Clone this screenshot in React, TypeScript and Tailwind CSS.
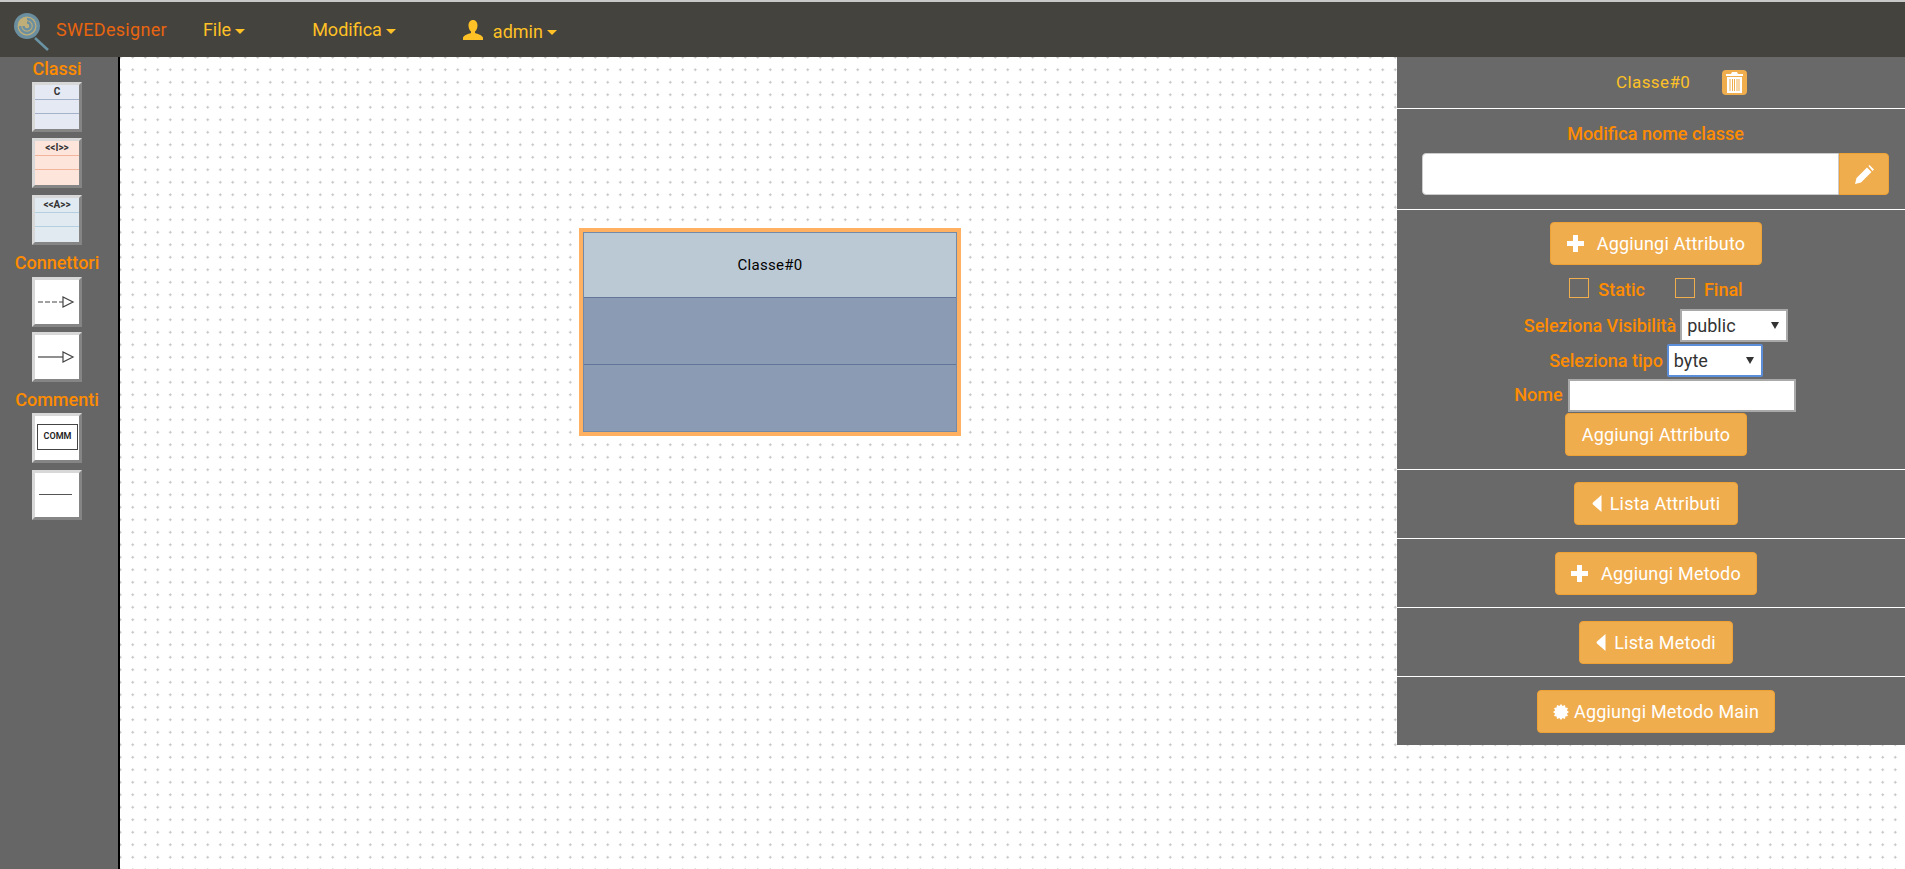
const font = "font-['Roboto',sans-serif]";

// 12-point seal for the "main" button
const certPoints = Array.from({ length: 24 }, (_, i) => {
  const r = i % 2 === 0 ? 8 : 6.2;
  const a = (i * Math.PI) / 12;
  return `${(8 + r * Math.sin(a)).toFixed(2)},${(8 - r * Math.cos(a)).toFixed(2)}`;
}).join(" ");

function Caret() {
  return <span className="inline-block ml-1 w-0 h-0 align-middle border-x-[5px] border-x-transparent border-t-[5px] border-t-current" />;
}

function Logo() {
  return (
    <svg width="36" height="40" viewBox="0 0 36 40" className="shrink-0">
      <line x1="22" y1="27" x2="35" y2="39" stroke="#6a93a3" strokeWidth="2.5" />
      <circle cx="14" cy="15" r="13" fill="#6c8fa0" />
      <circle cx="14" cy="15" r="9.500" fill="#bfae78" />
      <path d="M14 8a7 7 0 1 1-7 7 M14 11.500a3.500 3.500 0 1 1-3.500 3.500" fill="none" stroke="#6c8fa0" strokeWidth="2.500" />
    </svg>
  );
}

function PlusIcon() {
  return (
    <svg width="17" height="17" viewBox="0 0 17 17" fill="#fff" className="shrink-0">
      <path d="M6 0h5v6h6v5h-6v6H6v-6H0V6h6z" />
    </svg>
  );
}

function TriangleIcon() {
  return (
    <svg width="10" height="17" viewBox="0 0 10 17" fill="#fff" className="shrink-0">
      <path d="M9.500 0v17L1 9.500a1.500 1.500 0 0 1 0-2z" />
    </svg>
  );
}

function CertIcon() {
  return (
    <svg width="16" height="16" viewBox="0 0 16 16" fill="#fff" className="shrink-0">
      <polygon points={certPoints} />
    </svg>
  );
}

function TrashIcon() {
  return (
    <svg width="17" height="21" viewBox="0 0 17 21" fill="#fff">
      <path d="M6 0h5l1 2h5v2H0V2h5z" />
      <path fillRule="evenodd" d="M1 5h15v16H1zM3.500 7v12h1V7zM6 7v12h1V7zM8 7v12h1V7zM10.500 7v12h1V7zM12.500 7v12h1V7z" />
    </svg>
  );
}

function PencilIcon() {
  return (
    <svg width="19" height="19" viewBox="0 0 19 19" fill="#fff">
      <path d="M0 19l1.500-6L12 2.500 16.500 7 6 17.500zM13.500 1l1-1L19 4.500l-1.500 1.500z" />
    </svg>
  );
}

function Tile({ children, bg = "bg-white" }: { children: React.ReactNode; bg?: string }) {
  return (
    <div className={`w-[50px] h-[50px] border-[3px] border-t-[#d8d8d8] border-l-[#d8d8d8] border-r-[#858585] border-b-[#858585] ${bg}`}>
      {children}
    </div>
  );
}

function ClassTile({ label, fill, line }: { label: string; fill: string; line: string }) {
  return (
    <Tile>
      <div className={`h-full flex flex-col ${fill}`}>
        <div className={`h-[15px] border-b ${line} text-[10px] leading-[13px] font-bold text-center text-[#333]`}>{label}</div>
        <div className={`h-[14px] border-b ${line}`} />
      </div>
    </Tile>
  );
}

function OrangeBtn({ children, className = "" }: { children: React.ReactNode; className?: string }) {
  return (
    <button className={`flex items-center justify-center h-[43px] rounded-[4px] bg-[#f0ad4e] border border-[#eea236] text-white text-[18px] tracking-[0.2px] ${className}`}>
      {children}
    </button>
  );
}

function SideTitle({ children, className = "" }: { children: React.ReactNode; className?: string }) {
  return <div className={`text-[#ff8c00] text-[18px] font-medium leading-[22px] text-center ${className}`}>{children}</div>;
}

function NavMenu({ label, className = "" }: { label: string; className?: string }) {
  return (
    <span className={`text-[#ffc125] text-[18px] ${className}`}>
      {label}
      <Caret />
    </span>
  );
}

function SelectBox({ value, className }: { value: string; className: string }) {
  return (
    <div className="relative">
      <select className={`appearance-none h-[33px] bg-white border-2 text-[#333] pl-[5px] font-normal block ${className}`}>
        <option>{value}</option>
      </select>
      <span className="absolute right-[9px] top-[13px] w-0 h-0 border-x-[4px] border-x-transparent border-t-[7px] border-t-[#333]" />
    </div>
  );
}

export default function App() {
  return (
    <div className={`h-screen flex flex-col overflow-hidden bg-white ${font}`}>
      <header className="h-[57px] shrink-0 flex items-center bg-[#45433e] border-t-2 border-t-[#c8c8c8]">
        <div className="ml-[13px] mt-[3px]"><Logo /></div>
        <span className="ml-[7px] text-[#e8650f] text-[18px] tracking-[0.3px]">SWEDesigner</span>
        <NavMenu label="File" className="ml-[36px]" />
        <NavMenu label="Modifica" className="ml-[67px]" />
        <svg width="20" height="20" viewBox="0 0 20 20" fill="#ffc125" className="ml-[67px]">
          <path d="M10 0c3 0 4.500 2.500 4.500 5.500 0 2.500-1 5-2.500 6v1.500c3 1 7 2 8 4.500V20H0v-2.500c1-2.500 5-3.500 8-4.500v-1.500c-1.500-1-2.500-3.500-2.500-6C5.500 2.500 7 0 10 0z" />
        </svg>
        <NavMenu label="admin" className="ml-[10px] mt-[3px]" />
      </header>

      <div className="flex-1 flex min-h-0">
        <aside className="w-[120px] shrink-0 bg-[#666666] border-r-2 border-r-black flex flex-col items-center pr-[4px] pt-[1px]">
          <SideTitle>Classi</SideTitle>
          <div className="flex flex-col gap-[6px] mt-[2px]">
            <ClassTile label="C" fill="bg-[#e4e9f3]" line="border-[#a3b1c9]" />
            <ClassTile label="<<I>>" fill="bg-[#fde5dc]" line="border-[#f3b49c]" />
            <div className="mt-[1px]">
              <ClassTile label="<<A>>" fill="bg-[#e1e9f1]" line="border-[#b3cfe0]" />
            </div>
          </div>
          <SideTitle className="mt-[7px]">Connettori</SideTitle>
          <div className="flex flex-col gap-[5px] mt-[3px]">
            <Tile>
              <svg width="44" height="44" viewBox="0 0 44 44" fill="none" stroke="#444" strokeWidth="1.200">
                <path d="M3 22h25" strokeDasharray="5 2" />
                <path d="M28 17v10l10-5z" fill="#fff" />
              </svg>
            </Tile>
            <Tile>
              <svg width="44" height="44" viewBox="0 0 44 44" fill="none" stroke="#444" strokeWidth="1.200">
                <path d="M3 22h25" />
                <path d="M28 17v10l10-5z" fill="#fff" />
              </svg>
            </Tile>
          </div>
          <SideTitle className="mt-[7px]">Commenti</SideTitle>
          <div className="flex flex-col gap-[7px] mt-[2px]">
            <Tile>
              <div className="mt-[8px] ml-[2px] w-[41px] h-[26px] border border-[#444] flex items-center justify-center text-[9px] font-semibold text-[#222]">COMM</div>
            </Tile>
            <Tile>
              <div className="mt-[21px] ml-[4px] w-[33px] h-[1px] bg-[#555]" />
            </Tile>
          </div>
        </aside>

        <main className="flex-1 relative bg-white bg-[radial-gradient(circle,#c4c4c4_1px,transparent_1px)] bg-[size:12.500px_12.500px] bg-[position:-6px_-6px]">
          <div className="absolute left-[459px] top-[171px] w-[382px] h-[208px] border-[4px] border-[#ffb060] bg-[#8b9bb4] flex flex-col">
            <div className="flex-1 border border-[#7488a8] flex flex-col">
              <div className="h-[65px] pt-[1px] bg-[#bbc9d5] border-b border-[#62769a] flex items-center justify-center text-[15px] tracking-[0.3px] text-black">Classe#0</div>
              <div className="h-[67px] border-b border-[#62769a]" />
            </div>
          </div>

          <div className="absolute right-0 top-0 w-[508px] bg-[#696969]">
            <section className="h-[52px] border-b border-white pl-[219px] flex items-center">
              <span className="w-[76px] text-[#ffc125] text-[17px] tracking-[0.4px] whitespace-nowrap">Classe#0</span>
              <span className="ml-[30px] w-[25px] h-[25px] rounded-[4px] bg-[#f0ad4e] flex items-center justify-center"><TrashIcon /></span>
            </section>

            <section className="h-[101px] border-b border-white pl-[10px] pr-[1px] flex flex-col items-center pt-[14px]">
              <div className="text-[#ff8c00] text-[18px] font-medium leading-[22px]">Modifica nome classe</div>
              <div className="flex mt-[8px] w-[467px] h-[42px]">
                <input className="flex-1 bg-white rounded-l-[4px] border border-[#ccc]" />
                <span className="w-[50px] rounded-r-[4px] bg-[#f0ad4e] border border-[#eea236] flex items-center justify-center"><PencilIcon /></span>
              </div>
            </section>

            <section className="h-[260px] border-b border-white pl-[10px] flex flex-col items-center pt-[12px]">
              <OrangeBtn className="w-[212px] gap-[13px]"><PlusIcon />Aggiungi Attributo</OrangeBtn>
              <div className="flex items-center mt-[13px] text-[#ff8c00] text-[18px] font-medium h-[20px]">
                <span className="w-5 h-5 border border-[#f0ad4e]" />
                <span className="ml-[9px] mt-[2px]">Static</span>
                <span className="w-5 h-5 border border-[#f0ad4e] ml-[30px]" />
                <span className="ml-[9px] mt-[2px]">Final</span>
              </div>
              <div className="flex items-center gap-[4px] mt-[11px] text-[#ff8c00] text-[18px] font-medium">
                <span>Seleziona Visibilità</span>
                <SelectBox value="public" className="w-[108px] border-[#a9a9a9]" />
              </div>
              <div className="flex items-center gap-[4px] mt-[2px] text-[#ff8c00] text-[18px] font-medium">
                <span>Seleziona tipo</span>
                <SelectBox value="byte" className="w-[96px] border-[#5b8dd9] rounded-[2px]" />
              </div>
              <div className="flex items-center gap-[5px] mt-[2px] pr-[2px] text-[#ff8c00] text-[18px] font-medium">
                <span className="-mt-[2px]">Nome</span>
                <input className="w-[228px] h-[33px] bg-white border-2 border-[#a9a9a9]" />
              </div>
              <OrangeBtn className="w-[182px] mt-[1px]">Aggiungi Attributo</OrangeBtn>
            </section>

            <section className="h-[69px] border-b border-white pl-[10px] flex justify-center pt-[12px]">
              <OrangeBtn className="w-[164px] gap-[8px]"><TriangleIcon />Lista Attributi</OrangeBtn>
            </section>
            <section className="h-[69px] border-b border-white pl-[10px] flex justify-center pt-[13px]">
              <OrangeBtn className="w-[202px] h-[42px] gap-[13px]"><PlusIcon />Aggiungi Metodo</OrangeBtn>
            </section>
            <section className="h-[69px] border-b border-white pl-[10px] flex justify-center pt-[13px]">
              <OrangeBtn className="w-[154px] h-[42px] gap-[8px]"><TriangleIcon />Lista Metodi</OrangeBtn>
            </section>
            <section className="h-[68px] pl-[10px] flex justify-center pt-[13px]">
              <OrangeBtn className="w-[238px] h-[42px] gap-[5px]"><CertIcon />Aggiungi Metodo Main</OrangeBtn>
            </section>
          </div>
        </main>
      </div>
    </div>
  );
}
